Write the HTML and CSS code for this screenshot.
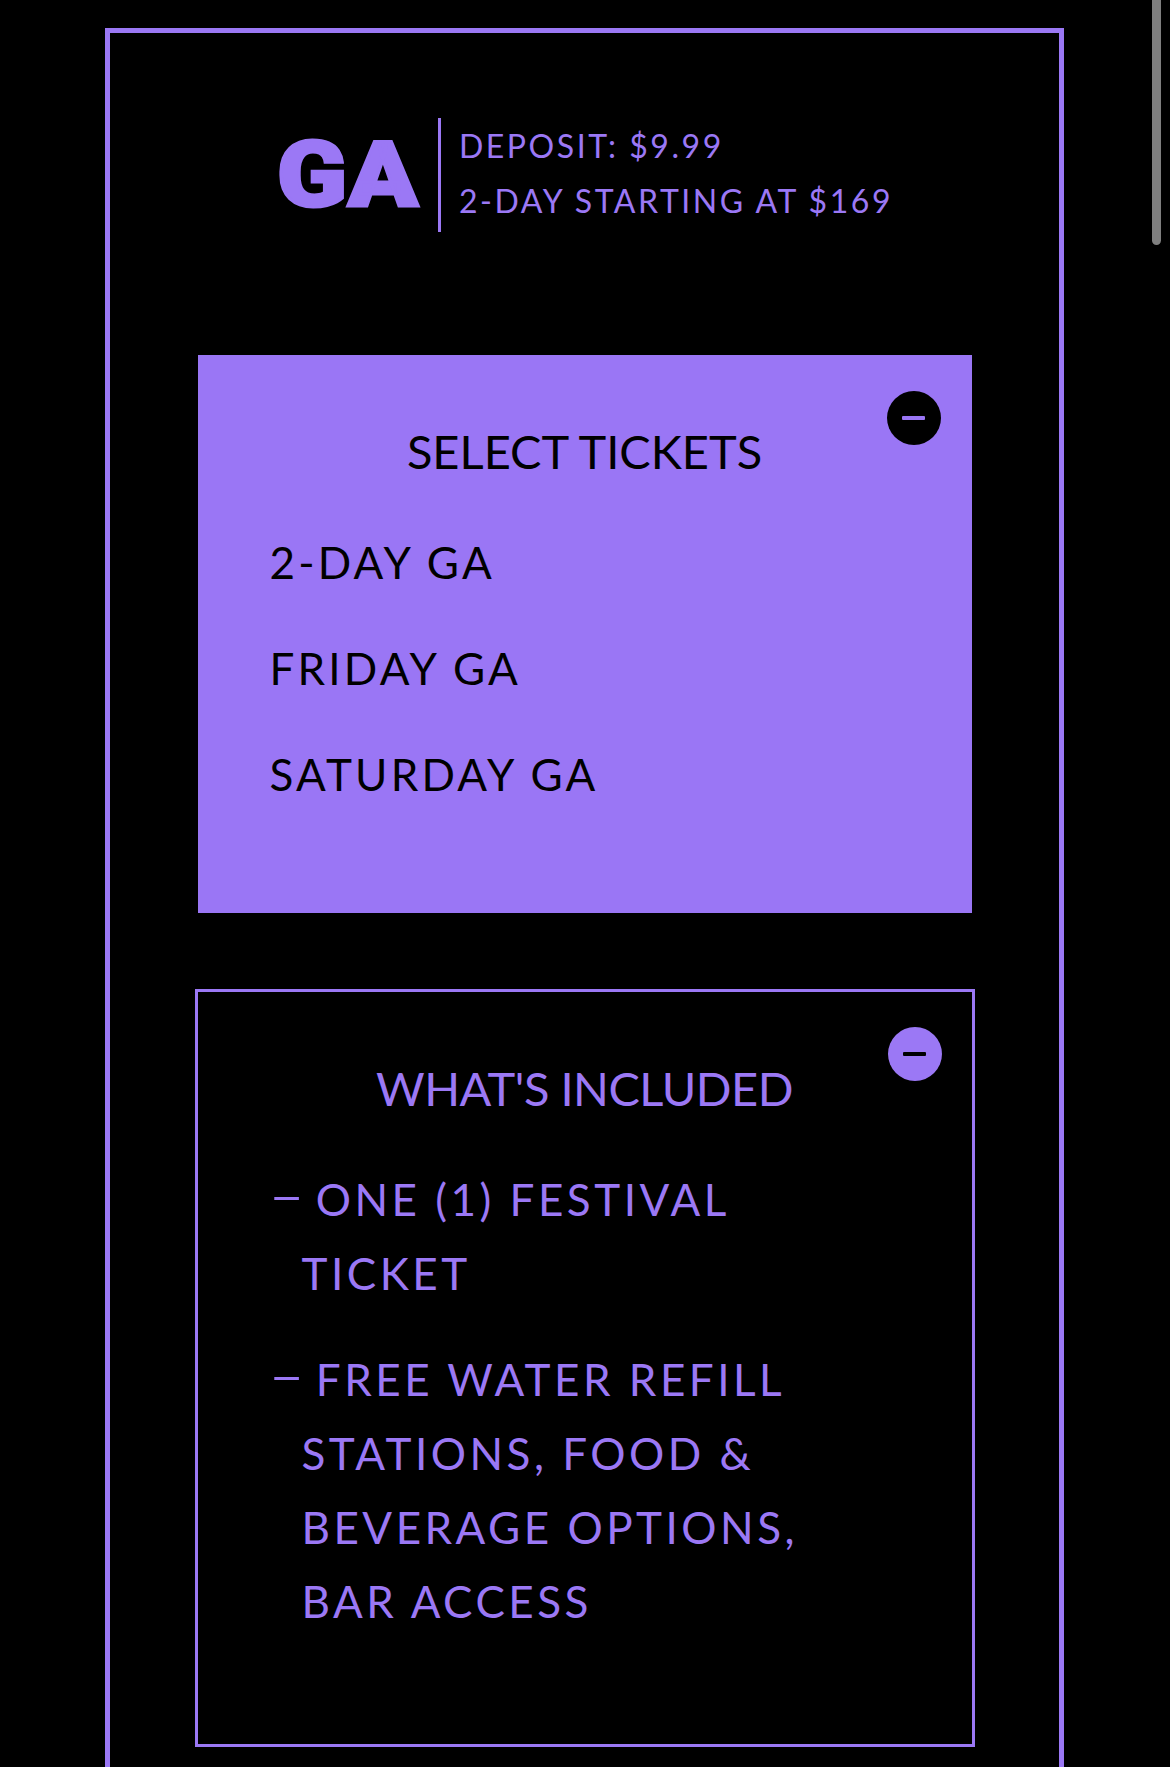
FILE: index.html
```html
<!DOCTYPE html>
<html lang="en">
<head>
<meta charset="utf-8">
<title>GA Tickets</title>
<link rel="stylesheet" href="styles.css">
</head>
<body>
<div class="scrollbar"></div>
<main class="frame">
  <header class="pass-head">
    <div class="pass-logo"><span class="pass-logo-text">GA</span></div>
    <div class="pass-divider"></div>
    <div class="pass-info">
      <div class="pass-line">DEPOSIT: $9.99</div>
      <div class="pass-line">2-DAY STARTING AT $169</div>
    </div>
  </header>

  <section class="panel panel-filled">
    <button class="toggle toggle-dark" aria-label="Collapse"><span class="toggle-bar"></span></button>
    <h2 class="panel-title">SELECT TICKETS</h2>
    <ul class="ticket-list">
      <li class="ticket-item">2-DAY GA</li>
      <li class="ticket-item">FRIDAY GA</li>
      <li class="ticket-item">SATURDAY GA</li>
    </ul>
  </section>

  <section class="panel panel-outline">
    <button class="toggle toggle-light" aria-label="Collapse"><span class="toggle-bar"></span></button>
    <h2 class="panel-title">WHAT'S INCLUDED</h2>
    <ul class="include-list">
      <li class="include-item"><span class="dash">−</span> ONE (1) FESTIVAL TICKET</li>
      <li class="include-item"><span class="dash">−</span> FREE WATER REFILL STATIONS, FOOD &amp; BEVERAGE OPTIONS, BAR ACCESS</li>
    </ul>
  </section>
</main>
</body>
</html>
```

FILE: styles.css
```css
html {
  overflow: hidden;
  background: #000;
}
body {
  margin: 0;
  background: #000;
  font-family: "Lato", "Inter", sans-serif;
  color: #9b78f5;
}
.scrollbar {
  position: fixed;
  top: 0;
  right: 9px;
  width: 9px;
  height: 245px;
  background: #7f7f7f;
  border-radius: 0 0 5px 5px;
}
.frame {
  box-sizing: border-box;
  width: 959px;
  margin: 28px 0 0 105px;
  border: 5px solid #9b78f5;
  border-bottom: none;
  padding: 85px 0 200px;
  display: flex;
  flex-direction: column;
  align-items: center;
}
.pass-head {
  display: flex;
  align-items: center;
  justify-content: center;
  height: 114px;
}
.pass-logo {
  width: 141px;
  margin-right: 21px;
  padding-top: 2px;
  white-space: nowrap;
}
.pass-logo-text {
  display: inline-block;
  font-family: "Roboto", "Liberation Sans", sans-serif;
  font-weight: 900;
  font-size: 90px;
  line-height: 1;
  letter-spacing: 1px;
  -webkit-text-stroke: 3px #9b78f5;
  color: #9b78f5;
  transform: translateX(1px) scaleX(1.14);
  transform-origin: left center;
}
.pass-divider {
  width: 3px;
  height: 114px;
  background: #9b78f5;
  margin-right: 18px;
}
.pass-info {
  display: flex;
  flex-direction: column;
  margin-top: -4px;
}
.pass-line {
  font-size: 32px;
  line-height: 55px;
  font-weight: 400;
  letter-spacing: 2.55px;
}
.panel {
  position: relative;
  box-sizing: border-box;
  width: 774px;
  padding: 66px 40px 0 72px;
}
.panel-filled {
  margin-top: 123px;
  background: #9a76f5;
  color: #000;
  padding-bottom: 102px;
}
.panel-outline {
  margin-top: 76px;
  width: 780px;
  border: 3px solid #9b78f5;
  padding: 66px 43px 106px 75px;
}
.panel-title {
  margin: 0 0 44px;
  text-align: center;
  font-weight: 400;
  font-size: 47px;
  line-height: 60px;
  letter-spacing: 0;
  margin-left: -32px;
}
.panel-outline .panel-title {
  letter-spacing: -0.5px;
}
.toggle {
  position: absolute;
  top: 36px;
  right: 31px;
  width: 54px;
  height: 54px;
  border: none;
  border-radius: 50%;
  padding: 0;
  display: flex;
  align-items: center;
  justify-content: center;
}
.panel-outline .toggle {
  top: 35px;
  right: 30px;
}
.toggle-dark { background: #000; }
.toggle-light { background: #9b78f5; }
.toggle-bar {
  display: block;
  width: 23px;
  height: 4px;
  border-radius: 1px;
}
.toggle-dark .toggle-bar { background: #9a76f5; }
.toggle-light .toggle-bar { background: #000; }
.ticket-list,
.include-list {
  list-style: none;
  margin: 0;
  padding: 0;
}
.ticket-item,
.include-item {
  font-size: 44px;
  line-height: 74px;
  letter-spacing: 3.5px;
  margin-bottom: 32px;
}
.ticket-item {
  letter-spacing: 3.2px;
}
.ticket-item:last-child,
.include-item:last-child {
  margin-bottom: 0;
}
.include-list {
  width: 560px;
}
.include-item {
  padding-left: 29px;
  text-indent: -29px;
}
.dash {
  display: inline-block;
  text-indent: 0;
  letter-spacing: 0;
  margin-right: 3px;
  transform: translate(-3px, -2px) scaleX(1.3);
  transform-origin: left center;
}
```
